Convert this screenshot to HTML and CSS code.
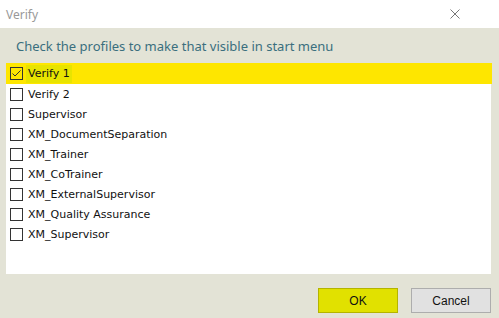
FILE: index.html
```html
<!DOCTYPE html>
<html>
<head>
<meta charset="utf-8">
<title>Verify</title>
<link rel="stylesheet" href="styles.css">
</head>
<body>
<div class="dialog">
    <div class="titlebar">
        <span class="title">Verify</span>
        <svg class="close" width="10" height="10" viewBox="0 0 10 10"><path d="M0.5 0.5L9.5 9.5M9.5 0.5L0.5 9.5" stroke="#777" stroke-width="1"/></svg>
    </div>
    <div class="prompt">Check the profiles to make that visible in start menu</div>
    <div class="list">
        <div class="row selected"><span class="box checked"><svg width="11" height="11" viewBox="0 0 11 11"><path d="M1.5 5.5L4 8L9.5 2.5" fill="none" stroke="#333" stroke-width="1"/></svg></span><span class="label focus">Verify 1</span></div>
        <div class="row"><span class="box"></span><span class="label">Verify 2</span></div>
        <div class="row"><span class="box"></span><span class="label">Supervisor</span></div>
        <div class="row"><span class="box"></span><span class="label">XM_DocumentSeparation</span></div>
        <div class="row"><span class="box"></span><span class="label">XM_Trainer</span></div>
        <div class="row"><span class="box"></span><span class="label">XM_CoTrainer</span></div>
        <div class="row"><span class="box"></span><span class="label">XM_ExternalSupervisor</span></div>
        <div class="row"><span class="box"></span><span class="label">XM_Quality Assurance</span></div>
        <div class="row"><span class="box"></span><span class="label">XM_Supervisor</span></div>
    </div>
    <div class="buttons">
        <div class="btn ok">OK</div>
        <div class="btn cancel">Cancel</div>
    </div>
</div>
</body>
</html>
```
FILE: styles.css
```css
body{margin:0; background-color:#e3e3d6; font-family:"Noto Sans", "DejaVu Sans", sans-serif;}
.dialog{width:499px; height:318px; display:flex; flex-direction:column;}
.titlebar{height:28px; background-color:#fff; display:flex; align-items:center; justify-content:space-between; padding:0 39px 0 6px;}
.title{font-size:12px; color:#999;}
.close{display:block;}
.prompt{height:35px; box-sizing:border-box; padding:9px 0 0 16px; font-size:13px; color:#3a6f7e;}
.list{margin-left:6px; width:485px; height:211px; background-color:#fff;}
.row{height:20px; display:flex; align-items:center; padding-left:4px; font-family:"DejaVu Sans", sans-serif; font-size:11px; color:#111;}
.row.selected{background-color:#fee600; height:21px; width:482px;}
.box{width:11px; height:11px; border:1px solid #333; display:block; margin-right:3px; background-color:#fff;}
.box.checked{background-color:transparent;}
.box svg{display:block;}
.label{padding:0 2px;}
.label.focus{background-color:#e8e400; padding:2px 2px 3px;}
.buttons{display:flex; justify-content:flex-end; gap:13px; padding:14px 8px 0 0;}
.btn{width:78px; height:23px; display:flex; align-items:center; justify-content:center; font-family:"Liberation Sans", sans-serif; font-size:12px; color:#111;}
.ok{background-color:#e1e100; border:1px solid #b4b400;}
.cancel{background-color:#e1e1e1; border:1px solid #adadad;}
```
